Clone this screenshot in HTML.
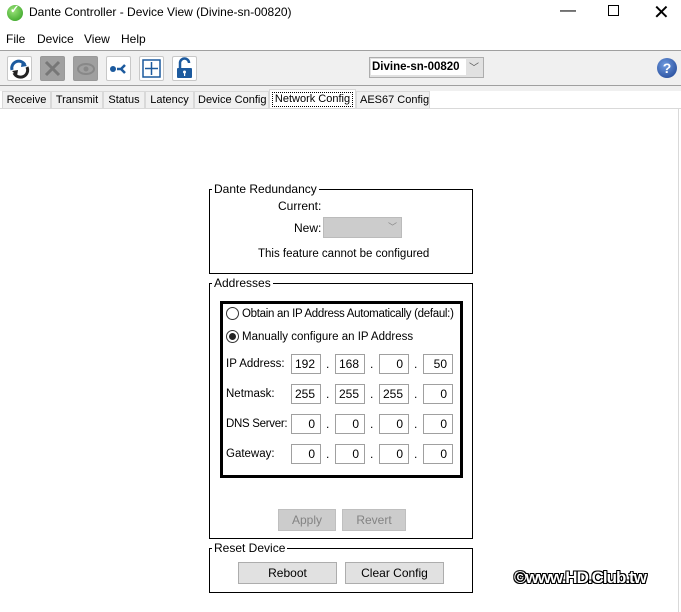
<!DOCTYPE html>
<html><head><style>
*{margin:0;padding:0;box-sizing:border-box}
body{width:681px;height:612px;background:#fff;font-family:"Liberation Sans",sans-serif;font-size:12px;color:#000;position:relative;overflow:hidden}
.a{position:absolute;white-space:nowrap}
.fs{position:absolute;border:1px solid #000}
.lg{position:absolute;background:#fff;padding:0 2px;top:-8px;left:2px;line-height:14px;white-space:nowrap}
.f{position:absolute;width:30px;height:20px;border:1px solid #a0a0a0;text-align:right;padding-right:5px;line-height:18px;background:#fff}
.d{position:absolute;line-height:18px}
.btn{position:absolute;border:1px solid #adadad;background:#e1e1e1;text-align:center;line-height:20px}
.tb{position:absolute;top:56px;width:25px;height:25px;border:1px solid #c8c8c8;background:#fff;border-radius:2px}
.tab{position:absolute;top:91px;height:18px;border:1px solid #d9d9d9;border-bottom:none;background:#f0f0f0;line-height:17px;padding:0 3px;white-space:nowrap;font-size:11px;overflow:hidden;text-align:center}
.sm{font-size:11.5px;line-height:14px}
</style></head><body>
<div class="a" style="left:7px;top:5px;width:16px;height:16px;border-radius:50%;background:radial-gradient(circle at 40% 35%,#9be37a,#2a9a1a);"></div>
<div class="a" style="left:10px;top:3px;color:#fff;font-size:11px;font-weight:bold">✓</div>
<div class="a" style="left:29px;top:5px;font-size:12px">Dante Controller - Device View (Divine-sn-00820)</div>
<div class="a" style="left:560px;top:2px;font-size:16px">—</div>
<div class="a" style="left:608px;top:5px;width:11px;height:11px;border:1px solid #000"></div>
<div class="a" style="left:653px;top:0px;font-size:20px;font-weight:100">✕</div>
<div class="a" style="left:6px;top:32px">File</div>
<div class="a" style="left:37px;top:32px">Device</div>
<div class="a" style="left:84px;top:32px">View</div>
<div class="a" style="left:121px;top:32px">Help</div>
<div class="a" style="left:0;top:50px;width:681px;height:41px;background:#f0f0f0;border-top:1px solid #a0a0a0"></div>
<div class="a" style="left:0;top:85px;width:681px;height:1px;background:#a0a0a0"></div>
<div class="tb" style="left:7px"><svg width="23" height="23"><path d="M4 13 A7 7 0 0 1 17 8" stroke="#1c5a9e" stroke-width="3" fill="none"/><path d="M14 4 L19 9 L13 10z" fill="#1c5a9e"/><path d="M19 10 A7 7 0 0 1 6 16" stroke="#222" stroke-width="3" fill="none"/><path d="M9 19 L4 14 L10 13z" fill="#222"/></svg></div>
<div class="tb" style="left:40px;background:#a0a0a0;border-color:#999"><svg width="23" height="23"><path d="M5 5 L18 18 M18 5 L5 18" stroke="#777" stroke-width="3"/></svg></div>
<div class="tb" style="left:73px;background:#a0a0a0;border-color:#999"><svg width="23" height="23"><ellipse cx="12" cy="12" rx="8" ry="5" stroke="#888" stroke-width="2" fill="none"/><circle cx="12" cy="12" r="2.5" fill="#888"/></svg></div>
<div class="tb" style="left:106px"><svg width="23" height="23"><circle cx="6" cy="12" r="3" fill="#1c5a9e"/><path d="M10 12 H14 M14 12 L18 8 M14 12 L18 16" stroke="#1c5a9e" stroke-width="2.5" fill="none"/></svg></div>
<div class="tb" style="left:139px"><svg width="23" height="23"><rect x="3" y="3" width="17" height="17" stroke="#1c5a9e" stroke-width="1.5" fill="none"/><path d="M11.5 5 V18 M5 11.5 H18" stroke="#1c5a9e" stroke-width="1.5"/></svg></div>
<div class="tb" style="left:172px"><svg width="23" height="23"><path d="M7 11 V6 A4.5 4.5 0 0 1 16 6" stroke="#1c5a9e" stroke-width="2.5" fill="none"/><rect x="4" y="11" width="15" height="10" rx="1" fill="#1c5a9e"/><circle cx="11.5" cy="15" r="1.5" fill="#fff"/><rect x="11" y="15" width="1.2" height="4" fill="#fff"/></svg></div>
<div class="a" style="left:369px;top:57px;width:115px;height:21px;border:1px solid #adadad;background:#e1e1e1"></div>
<div class="a" style="left:371px;top:59px;width:95px;height:16px;background:#fff;font-weight:bold;line-height:16px;padding-left:1px;font-size:11.5px">Divine-sn-00820</div>
<div class="a" style="left:469px;top:59px;font-size:10px;color:#555">﹀</div>
<div class="a" style="left:657px;top:58px;width:20px;height:20px;border-radius:50%;background:radial-gradient(circle at 40% 35%,#6f9be0,#1a3f8f);color:#fff;font-weight:bold;font-size:14px;text-align:center;line-height:20px">?</div>
<div class="tab" style="left:2px;width:49px">Receive</div>
<div class="tab" style="left:51px;width:52px">Transmit</div>
<div class="tab" style="left:103px;width:42px">Status</div>
<div class="tab" style="left:145px;width:49px">Latency</div>
<div class="tab" style="left:194px;width:75px">Device Config</div>
<div class="a" style="left:269px;top:89px;width:87px;height:20px;background:#fff;border:1px solid #d9d9d9;border-bottom:none"><div style="margin:2px;border:1px dotted #000;line-height:13px;padding:0 1px;white-space:nowrap;font-size:11px;text-align:center">Network Config</div></div>
<div class="tab" style="left:356px;width:74px">AES67 Config</div>
<div class="a" style="left:0;top:108px;width:681px;height:1px;background:#d9d9d9"></div>
<div class="a" style="left:678px;top:108px;width:1px;height:504px;background:#d9d9d9"></div>
<div class="fs" style="left:209px;top:189px;width:264px;height:85px"><div class="lg">Dante Redundancy</div></div>
<div class="a" style="left:278px;top:199px">Current:</div>
<div class="a" style="left:294px;top:221px">New:</div>
<div class="a" style="left:323px;top:217px;width:79px;height:21px;background:#ccc;border:1px solid #bbb"><span style="position:absolute;right:4px;top:2px;font-size:9px;color:#888">﹀</span></div>
<div class="a sm" style="left:258px;top:247px">This feature cannot be configured</div>
<div class="fs" style="left:209px;top:283px;width:264px;height:256px"><div class="lg">Addresses</div></div>
<div class="a" style="left:220px;top:301px;width:243px;height:177px;border:3px solid #000"></div>
<div class="a" style="left:226px;top:307px;width:13px;height:13px;border:1px solid #333;border-radius:50%"></div>
<div class="a sm" style="left:242px;top:307px;letter-spacing:-0.3px">Obtain an IP Address Automatically (defaul:)</div>
<div class="a" style="left:226px;top:330px;width:13px;height:13px;border:1px solid #333;border-radius:50%"><div style="margin:2px;width:7px;height:7px;border-radius:50%;background:#222"></div></div>
<div class="a sm" style="left:242px;top:330px">Manually configure an IP Address</div>
<div class="a sm" style="left:226px;top:357px">IP Address:</div>
<div class="a sm" style="left:226px;top:387px">Netmask:</div>
<div class="a sm" style="left:226px;top:417px;letter-spacing:-0.3px">DNS Server:</div>
<div class="a sm" style="left:226px;top:447px">Gateway:</div>
<div class="f" style="left:291px;top:354px">192</div><div class="d" style="left:326px;top:355px">.</div>
<div class="f" style="left:335px;top:354px">168</div><div class="d" style="left:370px;top:355px">.</div>
<div class="f" style="left:379px;top:354px">0</div><div class="d" style="left:414px;top:355px">.</div>
<div class="f" style="left:423px;top:354px">50</div>
<div class="f" style="left:291px;top:384px">255</div><div class="d" style="left:326px;top:385px">.</div>
<div class="f" style="left:335px;top:384px">255</div><div class="d" style="left:370px;top:385px">.</div>
<div class="f" style="left:379px;top:384px">255</div><div class="d" style="left:414px;top:385px">.</div>
<div class="f" style="left:423px;top:384px">0</div>
<div class="f" style="left:291px;top:414px">0</div><div class="d" style="left:326px;top:415px">.</div>
<div class="f" style="left:335px;top:414px">0</div><div class="d" style="left:370px;top:415px">.</div>
<div class="f" style="left:379px;top:414px">0</div><div class="d" style="left:414px;top:415px">.</div>
<div class="f" style="left:423px;top:414px">0</div>
<div class="f" style="left:291px;top:444px">0</div><div class="d" style="left:326px;top:445px">.</div>
<div class="f" style="left:335px;top:444px">0</div><div class="d" style="left:370px;top:445px">.</div>
<div class="f" style="left:379px;top:444px">0</div><div class="d" style="left:414px;top:445px">.</div>
<div class="f" style="left:423px;top:444px">0</div>
<div class="btn" style="left:278px;top:509px;width:58px;height:22px;background:#ccc;border-color:#bfbfbf;color:#838383">Apply</div>
<div class="btn" style="left:342px;top:509px;width:64px;height:22px;background:#ccc;border-color:#bfbfbf;color:#838383">Revert</div>
<div class="fs" style="left:209px;top:548px;width:264px;height:45px"><div class="lg">Reset Device</div></div>
<div class="btn" style="left:238px;top:562px;width:99px;height:22px">Reboot</div>
<div class="btn" style="left:345px;top:562px;width:99px;height:22px">Clear Config</div>
<div class="a" style="left:514px;top:568px;font-size:17px;font-weight:bold;color:#fff;letter-spacing:-1px;text-shadow:-1px -1px 0 #000,1px -1px 0 #000,-1px 1px 0 #000,1px 1px 0 #000,0 1px 0 #000,1px 0 0 #000">©www.HD.Club.tw</div>
</body></html>
